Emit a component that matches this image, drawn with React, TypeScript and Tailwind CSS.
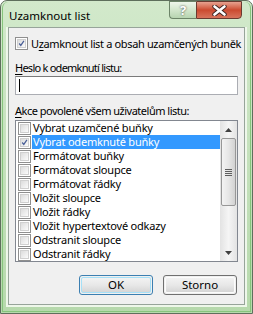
import React from "react";

const items = [
  "Vybrat uzamčené buňky",
  "Vybrat odemknuté buňky",
  "Formátovat buňky",
  "Formátovat sloupce",
  "Formátovat řádky",
  "Vložit sloupce",
  "Vložit řádky",
  "Vložit hypertextové odkazy",
  "Odstranit sloupce",
  "Odstranit řádky",
];

function Check({ checked }: { checked?: boolean }) {
  return (
    <div className="w-[13px] h-[13px] shrink-0 border border-[#8f8f8f] bg-white p-px">
      <div className="w-full h-full border border-[#d0d0d0] bg-gradient-to-br from-[#dcdcdc] to-[#fbfbfb] relative">
        {checked && (
          <svg viewBox="0 0 9 9" className="absolute inset-0 w-full h-full">
            <path d="M1.5 4.5 L3.6 7 L7.6 1.2" fill="none" stroke="#4a5f97" strokeWidth="1.6" />
          </svg>
        )}
      </div>
    </div>
  );
}

function WinButton({ label, primary }: { label: string; primary?: boolean }) {
  return (
    <div
      className={
        "w-[74px] h-[20px] rounded-[3px] border p-px " +
        (primary ? "border-[#3c7fb1]" : "border-[#707070]")
      }
    >
      <div
        className={
          "w-full h-full rounded-[2px] flex items-center justify-center leading-none bg-gradient-to-b from-[#f2f2f2] via-[#e8e8e8] to-[#d6d6d6] " +
          (primary ? "border border-[#a6e0f7]" : "border border-[#fcfcfc]")
        }
      >
        {label}
      </div>
    </div>
  );
}

export default function App() {
  return (
    <div
      className="w-[253px] h-[314px] rounded-t-[7px] border border-[#5e6f5c] bg-gradient-to-b from-[#d2e9cb] to-[#b6d9ac] p-px text-[11px] tracking-[-0.35px] text-black whitespace-nowrap"
      style={{ fontFamily: '"Noto Sans", sans-serif' }}
    >
      <div className="w-full h-full rounded-t-[6px] border-x border-b border-[#86c47c] flex flex-col">
        <div className="h-[25px] flex items-start justify-between pl-[6px] pr-[8px]">
          <div className="mt-[6px] leading-[15px] text-[11.5px] tracking-normal">Uzamknout list</div>
          <div className="flex -mt-px">
            <div className="w-[27px] h-[18px] rounded-bl-[4px] border border-[#6c8468] border-r-0 bg-gradient-to-b from-[#eef6eb] via-[#d2e6cc] to-[#b7d4b0] flex items-center justify-center font-bold text-[13px] leading-none text-white [text-shadow:0_0_2px_#333]">
              ?
            </div>
            <div className="w-[46px] h-[18px] rounded-br-[4px] border border-[#6a3a30] bg-gradient-to-b from-[#e6a18f] via-[#cb4a2f] to-[#d8735b] flex items-center justify-center">
              <svg width="15" height="11" viewBox="0 0 15 11">
                <path d="M2.5 1.5 L12.5 9.5 M12.5 1.5 L2.5 9.5" stroke="#3b2320" strokeWidth="4.4" strokeLinecap="round" />
                <path d="M2.5 1.5 L12.5 9.5 M12.5 1.5 L2.5 9.5" stroke="#ffffff" strokeWidth="2.6" strokeLinecap="round" />
              </svg>
            </div>
          </div>
        </div>
        <div className="flex-1 mx-[3px] mb-[4px] border-x-[2px] border-b-[2px] border-t-0 border-[#eef7ea]">
          <div className="w-full h-full border border-[#97a49a] bg-[#f0f0f0] px-[6px] pt-[8px]">
            <div className="h-[15px] flex items-center gap-[3px] leading-[15px]">
              <Check checked />
              <span>
                U<u className="underline-offset-2">z</u>amknout list a obsah uzamčených buněk
              </span>
            </div>
            <div className="mt-[10px] h-[14px] leading-[14px] tracking-[-0.75px]">
              <u className="underline-offset-2">H</u>eslo k odemknutí listu:
            </div>
            <div className="mt-px h-[19px] border border-[#abadb3] border-t-[#7a7a7a] bg-white flex items-center pl-[3px]">
              <div className="w-px h-[13px] bg-black" />
            </div>
            <div className="mt-[9px] h-[14px] leading-[14px] tracking-[-0.5px]">
              <u className="underline-offset-2">A</u>kce povolené všem uživatelům listu:
            </div>
            <div className="mt-[2px] h-[142px] w-[223px] border border-[#828790] bg-white flex">
              <div className="flex-1 flex flex-col tracking-[-0.2px]">
                {items.map((t, i) => (
                  <div key={t} className="h-[14px] flex items-center pl-[2px]">
                    <Check checked={i === 1} />
                    <div
                      className={
                        "ml-px h-[14px] flex-1 pl-px leading-[14px] " +
                        (i === 1 ? "bg-[#3399ff] text-white" : "")
                      }
                    >
                      {t}
                    </div>
                  </div>
                ))}
              </div>
              <div className="w-[17px] flex flex-col bg-gradient-to-r from-[#e3e3e3] via-[#f5f5f5] to-[#e3e3e3]">
                <div className="h-[17px] flex items-center justify-center">
                  <svg width="7" height="4" viewBox="0 0 7 4">
                    <path d="M0 4 L3.5 0 L7 4 Z" fill="#404040" />
                  </svg>
                </div>
                <div className="mx-px h-[68px] rounded-[2px] border border-[#979797] bg-gradient-to-r from-[#f3f3f3] via-[#e6e6e6] to-[#d2d2d2] flex flex-col items-center justify-center gap-px">
                  <div className="w-[7px] h-px bg-[#5e5e5e]" />
                  <div className="w-[7px] h-px bg-[#5e5e5e]" />
                  <div className="w-[7px] h-px bg-[#5e5e5e]" />
                  <div className="w-[7px] h-px bg-[#5e5e5e]" />
                </div>
                <div className="flex-1" />
                <div className="h-[17px] flex items-center justify-center">
                  <svg width="7" height="4" viewBox="0 0 7 4">
                    <path d="M0 0 L3.5 4 L7 0 Z" fill="#404040" />
                  </svg>
                </div>
              </div>
            </div>
            <div className="mt-[13px] flex justify-end gap-[10px] pr-px tracking-normal text-[11.5px]">
              <WinButton label="OK" primary />
              <WinButton label="Storno" />
            </div>
          </div>
        </div>
      </div>
    </div>
  );
}
